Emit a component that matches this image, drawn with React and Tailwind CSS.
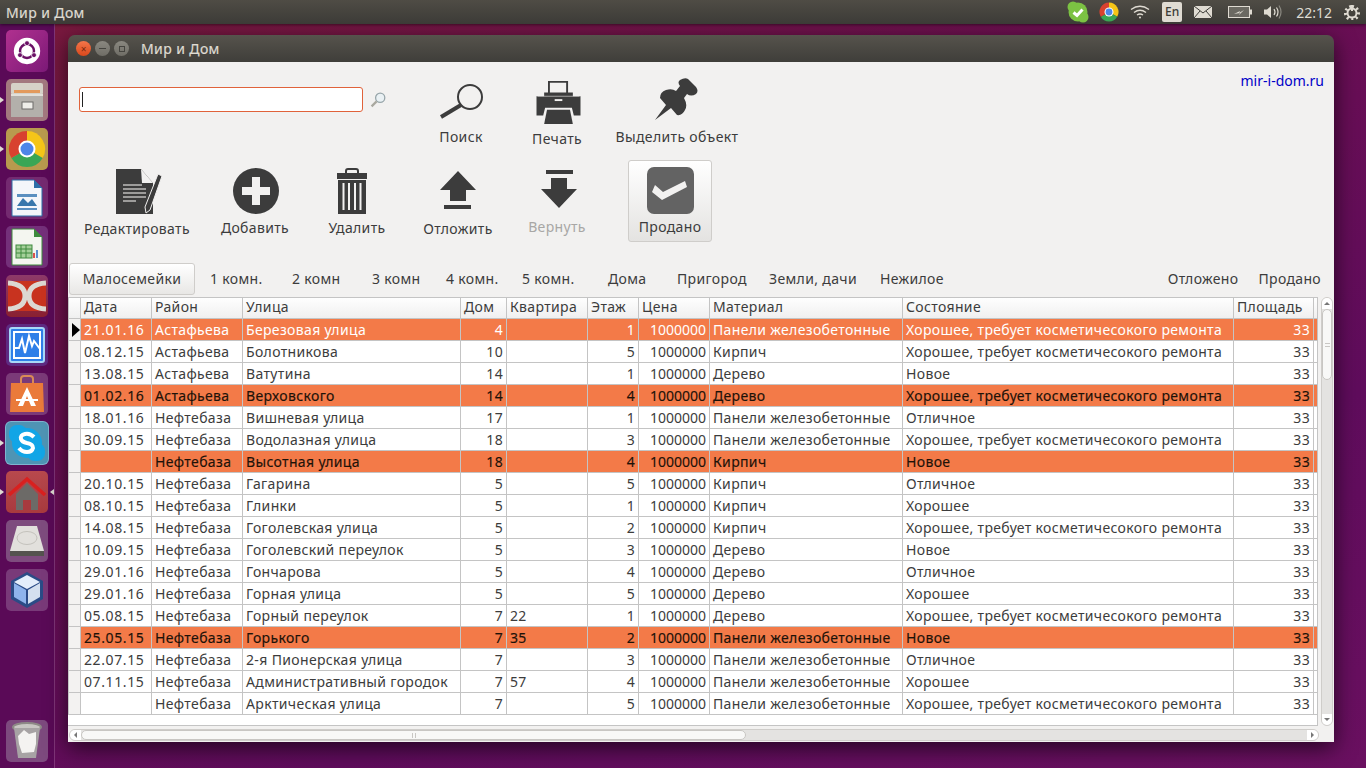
const columns = [
  { name: "Дата", width: 71, track: "tracking-[0.6px]" },
  { name: "Район", width: 91 },
  { name: "Улица", width: 218 },
  { name: "Дом", width: 46, right: true },
  { name: "Квартира", width: 81 },
  { name: "Этаж", width: 51, right: true },
  { name: "Цена", width: 71, right: true, track: "tracking-normal" },
  { name: "Материал", width: 193 },
  { name: "Состояние", width: 331 },
  { name: "Площадь", width: 80, right: true },
];

const REPAIR = "Хорошее, требует косметичесокого ремонта";
const PANEL = "Панели железобетонные";

const rows = [
  ["21.01.16", "Астафьева", "Березовая улица", "4", "", "1", "1000000", PANEL, REPAIR, "33", "first"],
  ["08.12.15", "Астафьева", "Болотникова", "10", "", "5", "1000000", "Кирпич", REPAIR, "33"],
  ["13.08.15", "Астафьева", "Ватутина", "14", "", "1", "1000000", "Дерево", "Новое", "33"],
  ["01.02.16", "Астафьева", "Верховского", "14", "", "4", "1000000", "Дерево", REPAIR, "33", "hot"],
  ["18.01.16", "Нефтебаза", "Вишневая улица", "17", "", "1", "1000000", PANEL, "Отличное", "33"],
  ["30.09.15", "Нефтебаза", "Водолазная улица", "18", "", "3", "1000000", PANEL, REPAIR, "33"],
  ["", "Нефтебаза", "Высотная улица", "18", "", "4", "1000000", "Кирпич", "Новое", "33", "hot"],
  ["20.10.15", "Нефтебаза", "Гагарина", "5", "", "5", "1000000", "Кирпич", "Отличное", "33"],
  ["08.10.15", "Нефтебаза", "Глинки", "5", "", "1", "1000000", "Кирпич", "Хорошее", "33"],
  ["14.08.15", "Нефтебаза", "Гоголевская улица", "5", "", "2", "1000000", "Кирпич", REPAIR, "33"],
  ["10.09.15", "Нефтебаза", "Гоголевский переулок", "5", "", "3", "1000000", "Дерево", "Новое", "33"],
  ["29.01.16", "Нефтебаза", "Гончарова", "5", "", "4", "1000000", "Дерево", "Отличное", "33"],
  ["29.01.16", "Нефтебаза", "Горная улица", "5", "", "5", "1000000", "Дерево", "Хорошее", "33"],
  ["05.08.15", "Нефтебаза", "Горный переулок", "7", "22", "1", "1000000", "Дерево", REPAIR, "33"],
  ["25.05.15", "Нефтебаза", "Горького", "7", "35", "2", "1000000", PANEL, "Новое", "33", "hot"],
  ["22.07.15", "Нефтебаза", "2-я Пионерская улица", "7", "", "3", "1000000", PANEL, "Отличное", "33"],
  ["07.11.15", "Нефтебаза", "Административный городок", "7", "57", "4", "1000000", PANEL, "Хорошее", "33"],
  ["", "Нефтебаза", "Арктическая улица", "7", "", "5", "1000000", PANEL, REPAIR, "33"],
];

const tabs = [
  { label: "1 комн.", width: 82 },
  { label: "2 комн", width: 80 },
  { label: "3 комн", width: 74 },
  { label: "4 комн.", width: 76 },
  { label: "5 комн.", width: 86 },
  { label: "Дома", width: 69 },
  { label: "Пригород", width: 92 },
  { label: "Земли, дачи", width: 111 },
  { label: "Нежилое", width: 80 },
];

const LauncherTile = ({ bg, active, pipLeft, pipRight, children }) => (
  <div className="relative w-[54px] h-[42px] flex justify-center">
    {pipLeft && <span className="absolute left-0 top-[18px] w-0 h-0 border-y-[3px] border-y-transparent border-l-[4px] border-l-[#dfdbd2]" />}
    {pipRight && <span className="absolute right-0 top-[18px] w-0 h-0 border-y-[3px] border-y-transparent border-r-[4px] border-r-[#dfdbd2]" />}
    <div className={`w-[42px] h-[42px] rounded-[5px] flex items-center justify-center overflow-hidden ${active ? "ring-1 ring-[#7fb4d0]" : ""}`} style={{ background: bg }}>
      {children}
    </div>
  </div>
);

const ChromeLogo = ({ size }) => (
  <svg width={size} height={size} viewBox="0 0 38 38">
    <path d="M19 19 L19 1 A18 18 0 0 1 34.6 28 Z" fill="#f5c518" />
    <path d="M19 19 L34.6 28 A18 18 0 0 1 3.4 28 Z" fill="#3aa655" />
    <path d="M19 19 L3.4 28 A18 18 0 0 1 19 1 Z" fill="#d8412f" />
    <circle cx="19" cy="19" r="8.5" fill="#fff" />
    <circle cx="19" cy="19" r="6.5" fill="#4d86e8" />
  </svg>
);

const Launcher = () => (
  <div className="w-[55px] shrink-0 border-r border-r-[#7f3578] bg-[#5a0a57] flex flex-col gap-[7px] pt-[6px] pb-[6px]">
    <LauncherTile bg="linear-gradient(135deg,#b0308f,#7d1a78)">
      <svg width="28" height="28" viewBox="0 0 34 34">
        <circle cx="17" cy="17" r="16" fill="#fff" />
        <circle cx="17" cy="17" r="8.5" fill="none" stroke="#6a1065" strokeWidth="3" />
        <circle cx="17" cy="7.5" r="3" fill="#6a1065" stroke="#fff" />
        <circle cx="8.5" cy="22" r="3" fill="#6a1065" stroke="#fff" />
        <circle cx="25.5" cy="22" r="3" fill="#6a1065" stroke="#fff" />
      </svg>
    </LauncherTile>
    <LauncherTile bg="#a3787f" pipLeft>
      <svg width="34" height="36" viewBox="0 0 34 36">
        <rect x="1" y="1" width="32" height="12" rx="2" fill="#d6d2c8" />
        <rect x="4" y="8" width="26" height="3" fill="#e39a5c" />
        <rect x="1" y="12" width="32" height="23" fill="#b3b0ab" />
        <rect x="1" y="12" width="32" height="2" fill="#e2e0da" />
        <rect x="12" y="20" width="11" height="7" fill="#efeee9" stroke="#6d6b68" />
      </svg>
    </LauncherTile>
    <LauncherTile bg="#b89a4e" pipLeft>
      <ChromeLogo size={38} />
    </LauncherTile>
    <LauncherTile bg="#742a70">
      <svg width="32" height="38" viewBox="0 0 32 38">
        <path d="M1 1 H23 L31 9 V37 H1 Z" fill="#f4f6fa" stroke="#2d6ea8" />
        <path d="M23 1 L31 9 H23 Z" fill="#2d6ea8" />
        <rect x="6" y="15" width="20" height="3" fill="#5a8fc0" />
        <path d="M6 27 L12 19 L17 24 L21 20 L26 27 Z" fill="#3977ac" />
        <rect x="6" y="29" width="20" height="2" fill="#5a8fc0" />
      </svg>
    </LauncherTile>
    <LauncherTile bg="#74307a">
      <svg width="32" height="38" viewBox="0 0 32 38">
        <path d="M1 1 H23 L31 9 V37 H1 Z" fill="#f4f6f0" stroke="#3e8a3e" />
        <path d="M23 1 L31 9 H23 Z" fill="#3e8a3e" />
        <rect x="5" y="17" width="16" height="13" fill="#a5d09a" stroke="#3e8a3e" />
        <path d="M5 21 H21 M5 25 H21 M10 17 V30 M15 17 V30" stroke="#3e8a3e" />
        <rect x="22" y="25" width="2" height="5" fill="#d9534f" />
        <rect x="25" y="22" width="2" height="8" fill="#5b8fd0" />
      </svg>
    </LauncherTile>
    <LauncherTile bg="linear-gradient(180deg,#8d3a6a,#8a2030)">
      <svg width="38" height="34" viewBox="0 0 38 34">
        <rect x="0" y="2" width="38" height="30" fill="#c8331f" />
        <path d="M0 4 Q17 5 17 17 Q17 29 0 30" fill="none" stroke="#dcd8d2" strokeWidth="5" />
        <path d="M38 4 Q21 5 21 17 Q21 29 38 30" fill="none" stroke="#dcd8d2" strokeWidth="5" />
      </svg>
    </LauncherTile>
    <LauncherTile bg="#5e2a82">
      <svg width="36" height="36" viewBox="0 0 36 36">
        <rect x="1" y="1" width="34" height="34" rx="2" fill="#2f7fe8" stroke="#a8d8f8" strokeWidth="2" />
        <rect x="5" y="5" width="26" height="26" fill="#2f7fe8" stroke="#fff" strokeWidth="2" />
        <path d="M5 21 H10 L13 12 L16 26 L20 9 L23 19 L25 14 L31 22" fill="none" stroke="#fff" strokeWidth="2" />
      </svg>
    </LauncherTile>
    <LauncherTile bg="#7b3a78">
      <svg width="36" height="38" viewBox="0 0 36 38">
        <path d="M12 8 V4 Q12 1 15 1 H21 Q24 1 24 4 V8" fill="none" stroke="#d98a55" strokeWidth="2" />
        <path d="M2 8 H34 L35 37 H1 Z" fill="#ea7a3a" />
        <path d="M18 12 L27 31 H22 L18 21 L14 31 H9 Z" fill="#fff" />
        <rect x="7" y="24" width="22" height="2" fill="#fff" />
      </svg>
    </LauncherTile>
    <LauncherTile bg="#4f94b4" active pipLeft>
      <svg width="38" height="38" viewBox="0 0 38 38">
        <rect x="1" y="1" width="18" height="18" rx="8" fill="#12a5e6" />
        <rect x="19" y="19" width="18" height="18" rx="8" fill="#12a5e6" />
        <circle cx="19" cy="19" r="15" fill="#12a5e6" />
        <path d="M26 13 Q22 9 17 10 Q12 11 13 15 Q14 18 19 19 Q25 20 25 24 Q24 28 19 28 Q14 28 11 24" fill="none" stroke="#fff" strokeWidth="4" />
      </svg>
    </LauncherTile>
    <LauncherTile bg="linear-gradient(180deg,#b8494d,#a83a3e)" pipLeft pipRight>
      <svg width="38" height="36" viewBox="0 0 38 36">
        <path d="M8 20 L19 9 L30 20 V36 H8 Z" fill="#6c6a67" />
        <rect x="15" y="26" width="8" height="10" fill="#a83a3e" />
        <path d="M1 21 L19 5 L37 21" fill="none" stroke="#d9201f" strokeWidth="3.5" />
      </svg>
    </LauncherTile>
    <LauncherTile bg="#7e4c7e">
      <svg width="38" height="32" viewBox="0 0 38 32">
        <path d="M9 1 H29 L36 26 H2 Z" fill="#e2e0dc" />
        <path d="M2 26 H36 V31 H2 Z" fill="#55534f" />
        <ellipse cx="19" cy="13" rx="10" ry="6.5" fill="none" stroke="#c4c2bc" />
      </svg>
    </LauncherTile>
    <LauncherTile bg="#793a79">
      <svg width="38" height="38" viewBox="0 0 38 38">
        <path d="M19 1 L35 10 V28 L19 37 L3 28 V10 Z" fill="#2b4b86" />
        <path d="M19 4 L32 11 L19 18 L6 11 Z" fill="#e4eefb" />
        <path d="M6 12 L18 19 V33 L6 26 Z" fill="#8fb4ec" />
        <path d="M32 12 L20 19 V33 L32 26 Z" fill="#d4e0ef" />
      </svg>
    </LauncherTile>
    <div className="mt-auto">
      <LauncherTile bg="#7d4a7e">
        <svg width="32" height="38" viewBox="0 0 32 38">
          <ellipse cx="16" cy="5" rx="14" ry="4" fill="#c9c7c3" stroke="#8d8a86" strokeWidth="2" />
          <path d="M3 6 L7 36 H25 L29 6 Z" fill="#a7a3a4" />
          <path d="M7 14 L13 8 L18 12 L25 10 L25 22 L23 30 L11 31 L8 22 Z" fill="#f4f3f1" />
        </svg>
      </LauncherTile>
    </div>
  </div>
);

const WinDot = ({ bg, children }) => (
  <span className="w-[15px] h-[15px] rounded-full flex items-center justify-center" style={{ background: bg }}>
    {children}
  </span>
);

const TopBar = () => (
  <div className="h-[24px] shrink-0 bg-gradient-to-b from-[#4f4c45] to-[#3c3b37] flex items-center pl-[6px] pr-[6px] text-[#dfdbd2] text-[14px] shadow-[0_1px_3px_rgba(0,0,0,0.5)] relative z-10">
    <span className="tracking-[0.4px] [-webkit-text-stroke:0.2px_#dfdbd2]">Мир и Дом</span>
    <div className="ml-auto flex items-center h-full">
      <svg width="24" height="24" viewBox="0 0 24 24" className="mr-[9px]">
        <circle cx="7" cy="7" r="5.5" fill="#7cc243" />
        <circle cx="17" cy="17" r="5.5" fill="#7cc243" />
        <circle cx="12" cy="12" r="9.5" fill="#7cc243" />
        <path d="M7.5 12.5 L11 15.5 L16.5 9.5" fill="none" stroke="#fff" strokeWidth="3" />
      </svg>
      <div className="mr-[11px]">
        <ChromeLogo size={20} />
      </div>
      <svg width="20" height="14" viewBox="0 0 20 14" fill="none" stroke="#dfdbd2" strokeWidth="1.4" className="mr-[12px]">
        <path d="M1 4.5 Q10 -2 19 4.5" />
        <path d="M4 7.5 Q10 3 16 7.5" />
        <path d="M7 10 Q10 8 13 10" />
        <circle cx="10" cy="12.5" r="1" fill="#dfdbd2" stroke="none" />
      </svg>
      <span className="w-[20px] h-[20px] rounded-[2px] bg-[#dfdbd2] text-[#3c3b37] text-[12px] font-medium flex items-center justify-center mr-[12px]">En</span>
      <svg width="18" height="12" viewBox="0 0 18 12" className="mr-[16px]">
        <rect width="18" height="12" fill="#dfdbd2" />
        <path d="M0 0 L9 7 L18 0 M0 12 L6 5 M18 12 L12 5" fill="none" stroke="#3c3b37" />
      </svg>
      <svg width="24" height="12" viewBox="0 0 24 12" className="mr-[11px]">
        <rect x="0.5" y="0.5" width="21" height="11" fill="#6b6962" stroke="#dfdbd2" />
        <rect x="22" y="3.5" width="2" height="5" fill="#dfdbd2" />
        <path d="M6 8 L12 5 L11 7 L16 4 L11 9 L12 7 Z" fill="#dfdbd2" />
      </svg>
      <svg width="20" height="16" viewBox="0 0 20 16" className="mr-[13px]">
        <path d="M1 5.5 H4 L8 2 V14 L4 10.5 H1 Z" fill="#dfdbd2" />
        <path d="M11 5 Q13 8 11 11 M13.5 3.5 Q16.5 8 13.5 12.5" fill="none" stroke="#dfdbd2" strokeWidth="1.2" />
        <path d="M16 1.5 Q20 8 16 14.5" fill="none" stroke="#8a8880" strokeWidth="1.2" />
      </svg>
      <span className="text-[14px] mr-[12px]">22:12</span>
      <svg width="16" height="16" viewBox="0 0 16 16" fill="none" stroke="#dfdbd2" strokeWidth="2">
        <circle cx="8" cy="9" r="4.5" />
        <path d="M8 1 V7" />
        <path strokeDasharray="2 2.7" strokeWidth="3" d="M8 2.5 A6.5 6.5 0 1 1 7.9 2.5" />
      </svg>
    </div>
  </div>
);

const ToolIcon = ({ name }) => {
  if (name === "search") {
    return (
      <svg width="46" height="36" viewBox="0 0 46 36" fill="none">
        <circle cx="32" cy="14" r="12" stroke="#3c3c3c" strokeWidth="2" />
        <path d="M23 22 L3 34" stroke="#3c3c3c" strokeWidth="4" />
      </svg>
    );
  }
  if (name === "print") {
    return (
      <svg width="45" height="44" viewBox="0 0 46 46" className="ml-[3px]">
        <path d="M12 15 V1 H33 V15 H31 V3 H14 V15 Z" fill="#3c3c3c" />
        <path d="M8 13 H38 V17 H46 V37 H39 L37 29 H9 L7 37 H0 V17 H8 Z" fill="#3c3c3c" />
        <path d="M1 17 H45" stroke="#f2f1f0" strokeWidth="0.6" />
        <rect x="19" y="20" width="8" height="2" fill="#f2f1f0" />
        <path d="M11 31 H35 L38 46 H8 Z" fill="#3c3c3c" />
      </svg>
    );
  }
  if (name === "pin") {
    return (
      <svg width="44" height="44" viewBox="0 0 44 44">
        <path
          d="M0 42 L11 27 L5 20 Q5 14 11 12 Q17 10 21 13 L25 8 Q22 4 25 2 Q30 -1 33 1 L41 9 Q44 13 41 16 Q36 19 32 16 L29 20 Q33 27 30 32 Q27 38 22 37 L16 30 Z"
          fill="#3c3c3c"
        />
      </svg>
    );
  }
  if (name === "edit") {
    return (
      <svg width="46" height="45" viewBox="0 0 46 45" className="ml-[3px]">
        <path d="M0 0 H25 L37 14 V45 H0 Z" fill="#3c3c3c" />
        <path d="M25 0 L37 14 H26 Z" fill="#f2f1f0" />
        <path d="M7 16 H26 M7 20 H30 M7 24 H30 M7 28 H30 M7 32 H20" stroke="#bdbcba" strokeWidth="1.5" />
        <path d="M42 5 L46 7 L34 41 L30 44 L29 38 Z" fill="#3c3c3c" stroke="#f2f1f0" />
      </svg>
    );
  }
  if (name === "add") {
    return (
      <svg width="46" height="46" viewBox="0 0 46 46" className="ml-[2px]">
        <circle cx="23" cy="23" r="23" fill="#3c3c3c" />
        <path d="M19 9 H27 V19 H37 V27 H27 V37 H19 V27 H9 V19 H19 Z" fill="#f2f1f0" />
      </svg>
    );
  }
  if (name === "trash") {
    return (
      <svg width="30" height="46" viewBox="0 0 30 46" className="mr-[10px]">
        <path d="M9 5 V3 Q9 1 11 1 H19 Q21 1 21 3 V5" fill="none" stroke="#3c3c3c" strokeWidth="2" />
        <rect x="0" y="5" width="30" height="6" fill="#3c3c3c" />
        <rect x="1" y="12" width="28" height="34" fill="#3c3c3c" />
        <path d="M6.5 15 V42 M12 15 V42 M18 15 V42 M23.5 15 V42" stroke="#f2f1f0" strokeWidth="2" />
      </svg>
    );
  }
  if (name === "up") {
    return (
      <svg width="36" height="38" viewBox="0 0 36 38">
        <path d="M18 0 L36 19 H26 V30 H10 V19 H0 Z" fill="#3c3c3c" />
        <rect x="4" y="34" width="27" height="4" fill="#3c3c3c" />
      </svg>
    );
  }
  if (name === "down") {
    return (
      <svg width="36" height="38" viewBox="0 0 36 38" className="ml-[4px]">
        <rect x="5" y="0" width="27" height="4" fill="#3c3c3c" />
        <path d="M10 8 H26 V19 H36 L18 38 L0 19 H10 Z" fill="#3c3c3c" />
      </svg>
    );
  }
  return (
    <svg width="47" height="47" viewBox="0 0 47 47">
      <rect width="47" height="47" rx="7" fill="#636363" />
      <path d="M8 18 L16 25 L38 14 L40 20 L15 33 L5 25 Z" fill="#f2f1f0" />
    </svg>
  );
};

const ToolButton = ({ icon, label, width, iconBox, labelTop, muted }) => (
  <div className="flex flex-col items-center shrink-0" style={{ width }}>
    <div className="flex items-end justify-center" style={{ height: iconBox }}>
      <ToolIcon name={icon} />
    </div>
    <span className={`leading-[20px] whitespace-nowrap ${muted ? "text-[#a8a7a5]" : "text-[#3c3c3c]"}`} style={{ marginTop: labelTop }}>
      {label}
    </span>
  </div>
);

const Cell = ({ children, right, hot, first, width, track }) => (
  <td
    className={`h-[22px] p-0 border-r border-b border-[#c4c4c4] whitespace-nowrap overflow-hidden ${right ? "text-right pr-[3px]" : "pl-[3px]"} ${first ? "text-white" : hot ? "text-[#1d1208] [-webkit-text-stroke:0.15px_#1d1208]" : "text-[#3c3c3c]"} ${first || hot ? "bg-[#f37a48]" : ""} ${track || "tracking-[0.35px]"}`}
    style={{ width }}
  >
    {children}
  </td>
);

const DataTable = () => (
  <div className="flex-1 min-h-0 relative bg-white border-r border-b border-[#c4c4c4] overflow-hidden">
    <table className="table-fixed border-separate border-spacing-0 w-[1249px] text-[14px] leading-[18px]">
      <thead>
        <tr className="bg-gradient-to-b from-white to-[#efefef]">
          <th className="w-[13px] h-[22px] p-0 border-t border-l border-r border-b border-[#c4c4c4]" />
          {columns.map((col) => (
            <th key={col.name} className="h-[22px] p-0 pb-[3px] pl-[3px] text-left font-normal leading-[17px] tracking-[0.35px] text-[#3c3c3c] border-t border-r border-b border-[#c4c4c4] whitespace-nowrap overflow-hidden" style={{ width: col.width }}>
              {col.name}
            </th>
          ))}
          <th className="p-0 border-t border-b border-[#c4c4c4]" />
        </tr>
      </thead>
      <tbody>
        {rows.map((row, i) => {
          const hot = row[10] === "hot";
          const first = row[10] === "first";
          return (
            <tr key={i}>
              <td className="relative h-[22px] p-0 border-l border-r border-b border-[#c4c4c4] bg-[#f3f2f1]">
                {i === 0 && <span className="absolute left-[3px] top-[4px] w-0 h-0 border-y-[7px] border-y-transparent border-l-[8px] border-l-black" />}
              </td>
              {columns.map((col, c) => (
                <Cell key={col.name} right={col.right} hot={hot} first={first} width={col.width} track={col.track}>
                  {row[c]}
                </Cell>
              ))}
              <td className={`p-0 h-[22px] border-b border-[#c4c4c4] ${hot || first ? "bg-[#f37a48]" : ""}`} />
            </tr>
          );
        })}
      </tbody>
    </table>
  </div>
);

const VScroll = () => (
  <div className="absolute right-[1px] top-[235px] bottom-[16px] w-[12px] bg-[#e4e3e1] border border-[#cfcdca] rounded-[6px] flex flex-col items-center overflow-hidden">
    <div className="h-[11px] w-full shrink-0 bg-white flex items-center justify-center">
      <span className="w-0 h-0 border-x-[3px] border-x-transparent border-b-[3px] border-b-[#777]" />
    </div>
    <div className="h-[71px] w-full shrink-0 rounded-[5px] bg-[#f8f8f7] border border-[#c8c6c3] flex items-center justify-center">
      <span className="w-[5px] h-[4px] border-y border-[#c9c7c4]" />
    </div>
    <div className="flex-1" />
    <div className="h-[11px] w-full shrink-0 bg-white flex items-center justify-center">
      <span className="w-0 h-0 border-x-[3px] border-x-transparent border-t-[3px] border-t-[#777]" />
    </div>
  </div>
);

const HScroll = () => (
  <div className="absolute left-[1px] right-[15px] bottom-[1px] h-[12px] bg-[#e4e3e1] border border-[#cfcdca] rounded-[6px] flex items-center overflow-hidden">
    <div className="w-[11px] h-full shrink-0 bg-white flex items-center justify-center">
      <span className="w-0 h-0 border-y-[3px] border-y-transparent border-r-[3px] border-r-[#777]" />
    </div>
    <div className="w-[665px] h-full shrink-0 rounded-[5px] bg-[#f8f8f7] border border-[#c8c6c3] flex items-center justify-center">
      <span className="w-[4px] h-[5px] border-x border-[#c9c7c4]" />
    </div>
    <div className="flex-1" />
    <div className="w-[11px] h-full shrink-0 bg-white flex items-center justify-center">
      <span className="w-0 h-0 border-y-[3px] border-y-transparent border-l-[3px] border-l-[#777]" />
    </div>
  </div>
);

const AppWindow = () => (
  <div className="absolute left-[68px] top-[35px] w-[1266px] h-[707px] rounded-t-[7px] flex flex-col overflow-hidden shadow-[0_6px_22px_rgba(0,0,0,0.65)]">
    <div className="h-[27px] shrink-0 bg-gradient-to-b from-[#56534c] to-[#3f3e3a] flex items-center pl-[8px] text-[#dfdbd2] text-[14px]">
      <div className="flex items-center gap-[4px]">
        <WinDot bg="linear-gradient(#f4764a,#d8481c)">
          <span className="text-[#7a2a10] text-[10px] leading-none">×</span>
        </WinDot>
        <WinDot bg="linear-gradient(#8a8880,#6f6d66)">
          <span className="w-[7px] h-[1px] bg-[#45443f]" />
        </WinDot>
        <WinDot bg="linear-gradient(#8a8880,#6f6d66)">
          <span className="w-[6px] h-[6px] border border-[#45443f]" />
        </WinDot>
      </div>
      <span className="ml-[12px] tracking-[0.4px] [-webkit-text-stroke:0.2px_#dfdbd2]">Мир и Дом</span>
    </div>

    <div className="relative flex-1 min-h-0 flex flex-col bg-[#f2f1f0] text-[14px] text-[#3c3c3c] tracking-[0.35px]">
      <div className="h-[98px] shrink-0 flex">
        <div className="w-[343px] shrink-0 pl-[11px] pt-[25px] flex">
          <div className="w-[284px] h-[25px] bg-white border border-[#e0623a] rounded-[3px] flex items-center pl-[2px]">
            <span className="w-[1px] h-[15px] bg-[#222]" />
          </div>
          <svg width="16" height="16" viewBox="0 0 16 16" className="ml-[7px] mt-[5px]">
            <circle cx="10.2" cy="5.8" r="4.6" fill="#eaf1f4" stroke="#98a6aa" strokeWidth="1.3" />
            <path d="M6.6 9.4 L1.6 14.4" stroke="#a9a89f" strokeWidth="2.2" />
          </svg>
        </div>
        <div className="pt-[16px]">
          <div className="flex">
            <ToolButton icon="search" label="Поиск" width={100} iconBox={41} labelTop={8} />
            <ToolButton icon="print" label="Печать" width={92} iconBox={46} labelTop={5} />
            <ToolButton icon="pin" label="Выделить объект" width={148} iconBox={44} labelTop={5} />
          </div>
        </div>
        <a className="ml-auto mr-[10px] mt-[9px] text-[#0000c8] leading-[20px] tracking-normal">mir-i-dom.ru</a>
      </div>

      <div className="h-[103px] shrink-0 flex pl-[10px]">
        <div className="flex pt-[10px]">
          <ToolButton icon="edit" label="Редактировать" width={118} iconBox={44} labelTop={5} />
          <ToolButton icon="add" label="Добавить" width={118} iconBox={44} labelTop={4} />
          <ToolButton icon="trash" label="Удалить" width={86} iconBox={44} labelTop={4} />
          <ToolButton icon="up" label="Отложить" width={116} iconBox={39} labelTop={10} />
          <ToolButton icon="down" label="Вернуть" width={82} iconBox={38} labelTop={9} muted />
        </div>
        <div className="ml-[30px] w-[84px] h-[82px] rounded-[3px] border border-[#cfcdca] bg-gradient-to-b from-white to-[#e4e3e1] flex flex-col items-center pt-[6px]">
          <ToolIcon name="check" />
          <span className="leading-[20px] mt-[3px]">Продано</span>
        </div>
      </div>

      <div className="h-[34px] shrink-0 flex items-start pl-[1px]">
        <div className="w-[126px] h-[32px] rounded-[3px] border border-[#cfcdca] bg-gradient-to-b from-white to-[#e8e7e5] flex items-center justify-center pb-[2px] mr-[15px]">
          Малосемейки
        </div>
        {tabs.map((tab) => (
          <span key={tab.label} className="h-[32px] pb-[2px] flex items-center whitespace-nowrap" style={{ width: tab.width }}>{tab.label}</span>
        ))}
        <span className="h-[32px] pb-[2px] flex items-center ml-auto mr-[20px]">Отложено</span>
        <span className="h-[32px] pb-[2px] flex items-center mr-[13px]">Продано</span>
      </div>

      <div className="flex-1 min-h-0 flex flex-col pb-[16px] pr-[16px]">
        <DataTable />
      </div>
      <VScroll />
      <HScroll />
    </div>
  </div>
);

export default function App() {
  return (
    <div
      className="relative w-[1366px] h-[768px] overflow-hidden flex flex-col font-['Noto_Sans','Open_Sans',sans-serif]"
      style={{ background: "linear-gradient(160deg,#7b1a3c 0%,#6b0f52 35%,#5f0c5c 70%,#6a1060 100%)" }}
    >
      <TopBar />
      <div className="flex-1 min-h-0 flex">
        <Launcher />
      </div>
      <AppWindow />
    </div>
  );
}
